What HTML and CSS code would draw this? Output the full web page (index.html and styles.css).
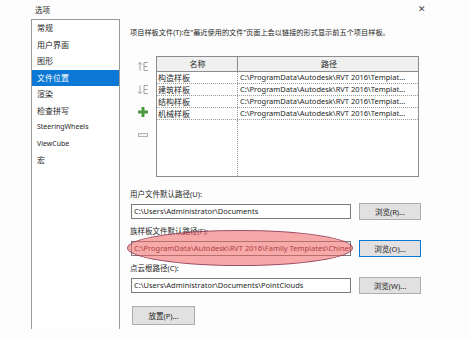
FILE: index.html
```html
<!DOCTYPE html>
<html lang="zh-CN">

<head>
  <meta charset="UTF-8">
  <title>选项</title>
  <link rel="stylesheet" href="styles.css">
</head>

<body>

  <div class="dialog">
    <div class="titlebar">
      <span class="title">选项</span>
      <span class="close">✕</span>
    </div>

    <div class="content">
      <ul class="sidebar">
        <li>常规</li>
        <li>用户界面</li>
        <li>图形</li>
        <li class="active">文件位置</li>
        <li>渲染</li>
        <li>检查拼写</li>
        <li class="latin">SteeringWheels</li>
        <li class="latin">ViewCube</li>
        <li>宏</li>
      </ul>

      <div class="panel">
        <p class="desc">项目样板文件(T):在“最近使用的文件”页面上会以链接的形式显示前五个项目样板。</p>

        <div class="templates">
          <div class="tools">
            <svg class="tool" viewBox="0 0 12 12" width="12" height="12">
              <path d="M3 2.5v8M1 4.5l2-2 2 2" stroke="#9aa0a6" fill="none" stroke-width="1" />
              <path d="M7 2.5h4M7 6.5h3.5M7 10.5h4M7 2.5v8" stroke="#9aa0a6" fill="none" stroke-width="1" />
            </svg>
            <svg class="tool" viewBox="0 0 12 12" width="12" height="12">
              <path d="M3 2.5v8M1 8.5l2 2 2-2" stroke="#9aa0a6" fill="none" stroke-width="1" />
              <path d="M7 2.5h4M7 6.5h3.5M7 10.5h4M7 2.5v8" stroke="#9aa0a6" fill="none" stroke-width="1" />
            </svg>
            <svg class="tool" viewBox="0 0 12 12" width="12" height="12">
              <path d="M4.5 1h3v3.5H11v3H7.5V11h-3V7.5H1v-3h3.5z" fill="#4c9a3c" />
            </svg>
            <svg class="tool" viewBox="0 0 12 12" width="12" height="12">
              <rect x="1.5" y="4.5" width="9" height="3" fill="#f4f4f4" stroke="#b0b4b8" />
            </svg>
          </div>

          <div class="grid">
            <div class="head">
              <span class="c1">名称</span>
              <span class="c2">路径</span>
            </div>
            <div class="row"><span class="c1">构造样板</span><span class="c2">C:\ProgramData\Autodesk\RVT 2016\Templat...</span></div>
            <div class="row"><span class="c1">建筑样板</span><span class="c2">C:\ProgramData\Autodesk\RVT 2016\Templat...</span></div>
            <div class="row"><span class="c1">结构样板</span><span class="c2">C:\ProgramData\Autodesk\RVT 2016\Templat...</span></div>
            <div class="row"><span class="c1">机械样板</span><span class="c2">C:\ProgramData\Autodesk\RVT 2016\Templat...</span></div>
            <div class="filler"><span class="c1"></span><span class="c2"></span></div>
          </div>
        </div>

        <div class="field">
          <div class="label">用户文件默认路径(U):</div>
          <div class="line">
            <div class="input">C:\Users\Administrator\Documents</div>
            <button>浏览(R)...</button>
          </div>
        </div>

        <div class="field marked">
          <div class="label">族样板文件默认路径(F):</div>
          <div class="line">
            <div class="input">C:\ProgramData\Autodesk\RVT 2016\Family Templates\Chinese</div>
            <button class="focus">浏览(O)...</button>
          </div>
          <div class="ellipse"></div>
        </div>

        <div class="field">
          <div class="label">点云根路径(C):</div>
          <div class="line">
            <div class="input">C:\Users\Administrator\Documents\PointClouds</div>
            <button>浏览(W)...</button>
          </div>
        </div>

        <button class="place">放置(P)...</button>
      </div>
    </div>
  </div>

</body>

</html>
```

FILE: styles.css
```css
body {
  margin: 0;
  background: #ffffff;
  font-family: 'Noto Sans', 'Noto Sans CJK SC', sans-serif;
  font-size: 8px;
  color: #262626;
}

.dialog {
  width: 470px;
  height: 339px;
  background: #fdfdfd;
}

.titlebar {
  height: 19px;
  display: flex;
  align-items: center;
  justify-content: space-between;
  padding: 0 44px 0 35px;
}

.title {
  font-size: 7.5px;
  margin-top: -1px;
}

.close {
  font-size: 9px;
  color: #444;
  margin-top: -2px;
}

.content {
  display: flex;
  padding-left: 31px;
}

.sidebar {
  list-style: none;
  margin: 0;
  padding: 0;
  width: 87px;
  height: 309px;
  border: 1px solid #9a9a9a;
  border-bottom: none;
  background: #ffffff;
}

.sidebar li {
  height: 16.5px;
  line-height: 16.5px;
  padding-left: 5px;
  font-size: 8px;
}

.sidebar li.latin {
  font-size: 7px;
}

.sidebar li.active {
  background: #0a78d4;
  color: #ffffff;
}

.panel {
  position: relative;
  padding-left: 10px;
  width: 300px;
}

.desc {
  margin: 0;
  padding-top: 7px;
  height: 12px;
  line-height: 12px;
  font-size: 7.2px;
  white-space: nowrap;
}

.templates {
  display: flex;
  margin-top: 18px;
}

.tools {
  width: 26px;
  display: flex;
  flex-direction: column;
  align-items: center;
  padding-top: 4px;
  gap: 11px;
}

.tool {
  display: block;
}

.grid {
  width: 261px;
  height: 119px;
  border: 1px solid #8c8c8c;
  display: flex;
  flex-direction: column;
  background: #ffffff;
}

.head,
.row,
.filler {
  display: flex;
}

.head {
  height: 14px;
  line-height: 14px;
  background: #f0f0f0;
  border-bottom: 1px solid #8c8c8c;
  text-align: center;
}

.head .c1 {
  border-right: 1px solid #8c8c8c;
}

.row {
  height: 11px;
  line-height: 11px;
  border-bottom: 1px dotted #9a9a9a;
  white-space: nowrap;
}

.c1 {
  width: 81px;
  padding-left: 1px;
  border-right: 1px dotted #9a9a9a;
  box-sizing: border-box;
  flex: none;
}

.c2 {
  flex: 1;
  padding-left: 2px;
  overflow: hidden;
}

.row .c2 {
  font-size: 7.5px;
}

.filler {
  flex: 1;
}

.field {
  position: relative;
  margin-top: 11px;
}

.field + .field {
  margin-top: 5px;
}

.label {
  height: 12px;
  line-height: 12px;
  font-size: 7.5px;
  margin-bottom: 2px;
}

.line {
  display: flex;
  align-items: center;
  height: 18px;
}

.input {
  margin-left: 1px;
  width: 216px;
  height: 13px;
  line-height: 13px;
  border: 1px solid #7a7a7a;
  background: #ffffff;
  padding-left: 2px;
  white-space: nowrap;
  overflow: hidden;
  font-size: 7.5px;
}

button {
  font-family: inherit;
  font-size: 7.5px;
  color: #262626;
  background: #e1e1e1;
  border: 1px solid #adadad;
  padding: 0;
  margin-left: 8px;
  width: 62px;
  height: 17px;
}

button.focus {
  border-color: #0a78d4;
}

.marked .input {
  color: #5a0a0a;
}

.ellipse {
  position: absolute;
  left: -3px;
  top: 5px;
  width: 226px;
  height: 36px;
  border-radius: 50%;
  background: rgba(238, 100, 100, 0.55);
  border: 1px solid rgba(120, 40, 70, 0.7);
  box-sizing: border-box;
}

.place {
  display: block;
  margin: 12px 0 0 2px;
  width: 63px;
  height: 19px;
}
```
